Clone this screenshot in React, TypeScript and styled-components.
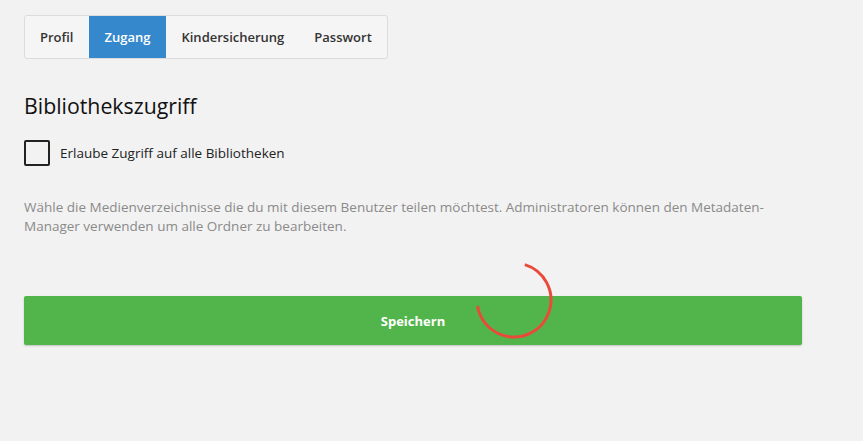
import styled, { createGlobalStyle } from 'styled-components'

const GlobalStyle = createGlobalStyle`
  html, body {
    margin: 0;
    padding: 0;
    background: #f2f2f2;
    font-family: "Open Sans", "Noto Sans", sans-serif;
  }
`

const Page = styled.div`
  width: 863px;
  height: 441px;
  box-sizing: border-box;
  padding: 15px 61px 0 24px;
  background: #f2f2f2;
`

const TabBar = styled.div`
  display: inline-flex;
  border: 1px solid #dcdcdc;
  border-radius: 3px;
  background: #f5f5f5;
  overflow: hidden;
`

const Tab = styled.div<{ active?: boolean }>`
  height: 42px;
  display: flex;
  align-items: center;
  padding: 0 ${({ active }) => active ? '16px' : '15px'};
  font-size: 13px;
  font-weight: 600;
  color: ${({ active }) => active ? '#fff' : '#333'};
  background: ${({ active }) => active ? '#3588cc' : 'transparent'};
`

const Title = styled.h2`
  margin: 34px 0 0;
  font-size: 21.3px;
  font-weight: 400;
  color: #111;
  line-height: 26px;
`

const CheckRow = styled.label`
  display: flex;
  align-items: center;
  gap: 10px;
  margin-top: 21px;
  font-size: 13.5px;
  color: #222;
`

const Box = styled.span`
  width: 22px;
  height: 22px;
  border: 2px solid #222;
  border-radius: 2px;
`

const Hint = styled.p`
  margin: 32px 0 0;
  font-size: 13.5px;
  line-height: 19px;
  color: #8a8a8a;
`

const SaveArea = styled.div`
  position: relative;
  margin-top: 60px;
`

const SaveButton = styled.button`
  width: 100%;
  height: 49px;
  border: 0;
  border-radius: 2px;
  background: #52b54b;
  color: #fff;
  font-family: inherit;
  font-size: 13px;
  font-weight: 700;
  box-shadow: 0 1px 2px rgba(0, 0, 0, 0.2);
`

const Spinner = styled.svg`
  position: absolute;
  left: 451px;
  top: -35px;
  width: 78px;
  height: 78px;
`

export default function App () {
  return (
    <Page>
      <GlobalStyle />
      <TabBar>
        <Tab>Profil</Tab>
        <Tab active>Zugang</Tab>
        <Tab>Kindersicherung</Tab>
        <Tab>Passwort</Tab>
      </TabBar>
      <Title>Bibliothekszugriff</Title>
      <CheckRow>
        <Box />
        Erlaube Zugriff auf alle Bibliotheken
      </CheckRow>
      <Hint>
        Wähle die Medienverzeichnisse die du mit diesem Benutzer teilen möchtest. Administratoren können den Metadaten-Manager verwenden um alle Ordner zu bearbeiten.
      </Hint>
      <SaveArea>
        <SaveButton>Speichern</SaveButton>
        <Spinner viewBox='0 0 78 78'>
          <circle
            cx='39'
            cy='39'
            r='37'
            fill='none'
            stroke='#ea4a3c'
            strokeWidth='3'
            strokeDasharray='157 233'
            strokeDashoffset='0'
            transform='rotate(-73 39 39)'
          />
        </Spinner>
      </SaveArea>
    </Page>
  )
}
